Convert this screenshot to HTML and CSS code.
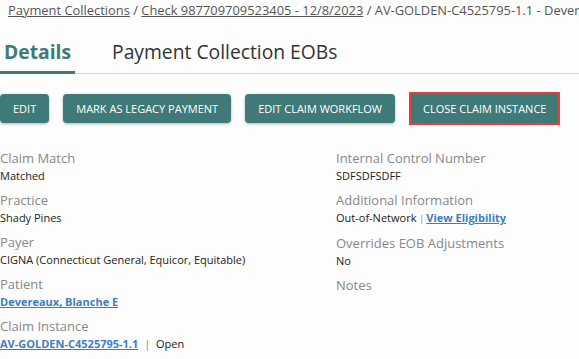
FILE: index.html
```html
<!DOCTYPE html>
<html lang="en">
<head>
  <meta charset="UTF-8" />
  <title>Claim Instance</title>
  <link rel="stylesheet" href="styles.css">
</head>
<body>
  <div class="crumbs">
    <a href="#">Payment Collections</a> / <a href="#">Check 987709709523405 - 12/8/2023</a> / AV-GOLDEN-C4525795-1.1 - Devereaux, Blanche E
  </div>
  <nav class="tabs">
    <a href="#" class="tab active">Details</a>
    <a href="#" class="tab">Payment Collection EOBs</a>
  </nav>
  <div class="actions">
    <button class="btn">Edit</button>
    <button class="btn">Mark as Legacy Payment</button>
    <button class="btn">Edit Claim Workflow</button>
    <span class="highlight"><button class="btn">Close Claim Instance</button></span>
  </div>
  <div class="details">
    <div class="col">
      <div class="field">
        <div class="label">Claim Match</div>
        <div class="value">Matched</div>
      </div>
      <div class="field">
        <div class="label">Practice</div>
        <div class="value">Shady Pines</div>
      </div>
      <div class="field">
        <div class="label">Payer</div>
        <div class="value">CIGNA (Connecticut General, Equicor, Equitable)</div>
      </div>
      <div class="field">
        <div class="label">Patient</div>
        <div class="value"><a href="#" class="link">Devereaux, Blanche E</a></div>
      </div>
      <div class="field">
        <div class="label">Claim Instance</div>
        <div class="value"><a href="#" class="link">AV-GOLDEN-C4525795-1.1</a> <span class="sep">|</span> Open</div>
      </div>
    </div>
    <div class="col">
      <div class="field">
        <div class="label">Internal Control Number</div>
        <div class="value">SDFSDFSDFF</div>
      </div>
      <div class="field">
        <div class="label">Additional Information</div>
        <div class="value">Out-of-Network <span class="sep small">|</span><a href="#" class="link">View Eligibility</a></div>
      </div>
      <div class="field">
        <div class="label">Overrides EOB Adjustments</div>
        <div class="value">No</div>
      </div>
      <div class="field">
        <div class="label">Notes</div>
      </div>
    </div>
  </div>
</body>
</html>
```

FILE: styles.css
```css
body {
  margin: 0;
  font-family: "Open Sans", sans-serif;
  background: #fdfdfd;
  color: #333;
  overflow: hidden;
}
.crumbs {
  padding: 1px 0 0 8px;
  font-size: 12.9px;
  color: #555;
  white-space: nowrap;
  overflow: hidden;
  line-height: 18px;
}
.crumbs a {
  color: #555;
}
.tabs {
  display: flex;
  margin-top: 20px;
  border-bottom: 1px solid #d8d8d8;
}
.tab {
  font-size: 19.3px;
  line-height: 26px;
  color: #333;
  text-decoration: none;
  padding: 0 4px 6px 4px;
  margin-bottom: -1px;
  margin-right: 33px;
}
.tab.active {
  color: #3d7a78;
  font-weight: bold;
  border-bottom: 3px solid #3d7a78;
}
.actions {
  display: flex;
  align-items: center;
  gap: 14px;
  margin-top: 18px;
}
.btn {
  font-family: "Open Sans", sans-serif;
  font-size: 11px;
  font-weight: 500;
  text-transform: uppercase;
  white-space: nowrap;
  flex-shrink: 0;
  color: #fff;
  background: #3f7a78;
  border: none;
  border-radius: 4px;
  height: 29px;
  padding: 0 13px;
  box-shadow: 0 1px 3px rgba(0,0,0,0.3);
}
.highlight {
  display: inline-block;
  flex-shrink: 0;
  border: 2px solid #f03a3a;
  line-height: 0;
}
.highlight .btn {
  border-radius: 0;
  box-shadow: none;
  padding: 0 12px;
}
.details {
  display: grid;
  grid-template-columns: 336px 1fr;
  margin-top: 24px;
}
.field {
  margin-bottom: 7px;
}
.label {
  font-size: 13px;
  color: #888;
  line-height: 18px;
}
.value {
  font-size: 11px;
  color: #222;
  line-height: 17px;
}
.link {
  color: #3a7fc4;
  font-weight: bold;
}
.sep {
  color: #888;
  margin: 0 3px;
}
.sep.small {
  margin: 0 2px 0 0;
  font-size: 9px;
}
```
